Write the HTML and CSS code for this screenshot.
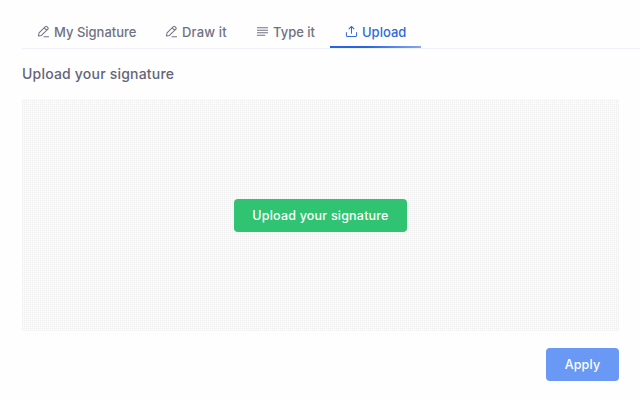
FILE: index.html
```html
<!DOCTYPE html>
<html lang="en">
<head>
<meta charset="utf-8">
<title>Upload your signature</title>
<link rel="stylesheet" href="styles.css">
</head>
<body>
<main class="page">
  <nav class="tabs">
    <a class="tab tab-sign">
      <svg class="icon" viewBox="0 0 14 14"><path d="M1.5 11.8 2.2 8.6 9 1.8a1.2 1.2 0 0 1 1.7 0l1 1a1.2 1.2 0 0 1 0 1.7L4.8 11.2ZM7.8 3l2.8 2.8M7.5 12.6h5"/></svg>
      <span>My Signature</span>
    </a>
    <a class="tab tab-draw">
      <svg class="icon" viewBox="0 0 14 14"><path d="M1.5 11.8 2.2 8.6 9 1.8a1.2 1.2 0 0 1 1.7 0l1 1a1.2 1.2 0 0 1 0 1.7L4.8 11.2ZM7.8 3l2.8 2.8M7.5 12.6h5"/></svg>
      <span>Draw it</span>
    </a>
    <a class="tab tab-type">
      <svg class="icon" viewBox="0 0 14 14"><path d="M1.5 3h11M1.5 5.7h11M1.5 8.4h11M1.5 11.1h8"/></svg>
      <span>Type it</span>
    </a>
    <a class="tab tab-upload active">
      <svg class="icon" viewBox="0 0 14 14"><path d="M7 9V1.8M4.4 4.2 7 1.6l2.6 2.6M1.5 8v3a1.5 1.5 0 0 0 1.5 1.5h8a1.5 1.5 0 0 0 1.5-1.5V8"/></svg>
      <span>Upload</span>
    </a>
  </nav>
  <h1 class="title">Upload your signature</h1>
  <section class="dropzone">
    <button class="btn btn-upload" type="button">Upload your signature</button>
  </section>
  <footer class="actions">
    <button class="btn btn-apply" type="button">Apply</button>
  </footer>
</main>
</body>
</html>
```
FILE: styles.css
```css
* { box-sizing: border-box; }
html, body { margin: 0; height: 100%; }
body {
  background: #fefefe;
  color: #5e6278;
  font-family: Inter, "Open Sans", sans-serif;
  overflow: hidden;
}
.page { width: 640px; height: 400px; padding: 0 21px 0 22px; display: flex; flex-direction: column; }
.tabs {
  display: flex;
  height: 49px;
  margin-right: -21px;
  padding-top: 19px;
  border-bottom: 1px solid #f0f0f8;
}
.tab {
  display: flex;
  align-items: center;
  gap: 4px;
  height: 29px;
  padding: 0 15px 4px;
  font-size: 13px;
  font-weight: 500;
  color: #6f7282;
  white-space: nowrap;
}
.tab-sign { width: 128px; }
.tab-draw { width: 91px; letter-spacing: 0.15px; }
.tab-type { width: 89px; }
.tab-upload { width: 91px; }
.tab.active {
  color: #2b6bdc;
  border-bottom: 2px solid #2f6fe4;
  padding-bottom: 2px;
  border-image: linear-gradient(90deg, #2566e0 40%, #86a9f0) 1;
}
.icon {
  width: 13px;
  height: 13px;
  flex: none;
  fill: none;
  stroke: currentColor;
  stroke-width: 1.1;
  stroke-linecap: round;
  stroke-linejoin: round;
}
.title {
  margin: 16px 0 17px;
  font-size: 14px;
  line-height: 17px;
  font-weight: 500;
  letter-spacing: 0.2px;
  color: #62657a;
}
.dropzone {
  height: 232px;
  display: flex;
  align-items: center;
  justify-content: center;
  background-color: #fdfdfd;
  background-image:
    repeating-linear-gradient(90deg, rgba(0, 0, 0, 0.025) 0 1px, transparent 1px 2px),
    repeating-linear-gradient(0deg, rgba(0, 0, 0, 0.025) 0 1px, transparent 1px 2px);
}
.btn {
  border: 0;
  border-radius: 4px;
  color: #fff;
  font-family: inherit;
  font-size: 12.5px;
  font-weight: 500;
  letter-spacing: 0.2px;
  padding: 0;
}
.btn-upload { width: 173px; height: 33px; background: #2fc372; }
.actions { display: flex; justify-content: flex-end; padding-top: 17px; }
.btn-apply { width: 73px; height: 33px; background: #6999f5; }
```
